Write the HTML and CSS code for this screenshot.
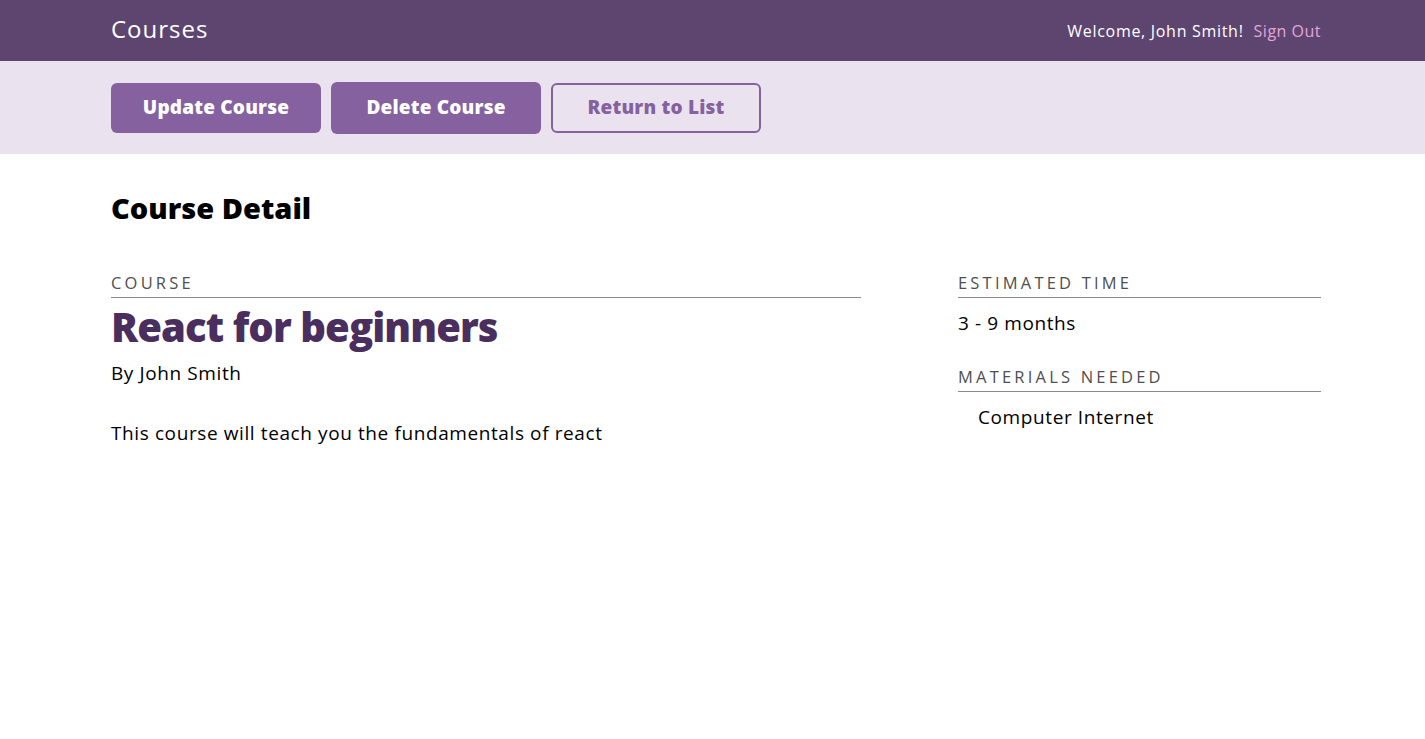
FILE: index.html
```html
<!DOCTYPE html>
<html lang="en">
<head>
<meta charset="utf-8">
<title>Courses</title>
<link rel="stylesheet" href="styles.css">
</head>
<body>
<header class="header">
  <div class="wrap header-inner">
    <h1 class="logo">Courses</h1>
    <nav class="user-nav">
      <span class="welcome">Welcome, John Smith!</span>
      <a class="signout" href="#">Sign Out</a>
    </nav>
  </div>
</header>
<div class="actions">
  <div class="wrap actions-inner">
    <a class="button" href="#">Update Course</a>
    <a class="button button-active" href="#">Delete Course</a>
    <a class="button button-secondary" href="#">Return to List</a>
  </div>
</div>
<main class="wrap">
  <h2 class="page-title">Course Detail</h2>
  <div class="detail">
    <div class="main-col">
      <h3 class="label">Course</h3>
      <h4 class="course-title">React for beginners</h4>
      <p class="author">By John Smith</p>
      <p class="desc">This course will teach you the fundamentals of react</p>
    </div>
    <div class="side-col">
      <h3 class="label">Estimated Time</h3>
      <p class="side-text">3 - 9 months</p>
      <h3 class="label label-gap">Materials Needed</h3>
      <ul class="materials">
        <li>Computer Internet</li>
      </ul>
    </div>
  </div>
</main>
</body>
</html>
```
FILE: styles.css
```css
* { box-sizing: border-box; }
body {
  margin: 0;
  font-family: "Open Sans", "Liberation Sans", sans-serif;
  color: #000;
  background: #fff;
}
.wrap {
  width: 1425px;
  padding: 0 104px 0 111px;
}
.header {
  background: #5d4570;
  height: 61px;
}
.header-inner {
  height: 61px;
  display: flex;
  align-items: center;
  justify-content: space-between;
}
.logo {
  margin: -4px 0 0;
  font-size: 24px;
  font-weight: 400;
  letter-spacing: 1px;
  color: #fff;
}
.user-nav {
  display: flex;
  gap: 10px;
  font-size: 16px;
}
.welcome { color: #fff; font-weight: 500; letter-spacing: 0.7px; }
.signout { color: #e3a6d9; text-decoration: none; letter-spacing: 0.5px; }
.actions {
  background: #ebe2f0;
  height: 93px;
}
.actions-inner {
  display: flex;
  align-items: center;
  gap: 10px;
  height: 93px;
}
.button {
  width: 210px;
  height: 50px;
  display: flex;
  align-items: center;
  justify-content: center;
  background: #8561a0;
  color: #fff;
  border-radius: 6px;
  font-size: 19px;
  font-weight: 800;
  letter-spacing: 0.2px;
  text-decoration: none;
  padding-bottom: 2px;
}
.button-active { height: 52px; }
.button-secondary {
  background: transparent;
  border: 2px solid #8561a0;
  color: #8561a0;
}
.page-title {
  margin: 36px 0 0;
  font-size: 29px;
  font-weight: 800;
  letter-spacing: 0;
  line-height: 36px;
}
.detail {
  display: flex;
  justify-content: space-between;
  margin-top: 46px;
}
.main-col { width: 750px; }
.side-col { width: 363px; }
.label {
  margin: 0;
  font-size: 16.5px;
  font-weight: 400;
  letter-spacing: 3.2px;
  text-transform: uppercase;
  color: #4f4f4f;
  line-height: 22px;
  padding-bottom: 3px;
  border-bottom: 1px solid #8a8a8a;
}
.label-gap { margin-top: 30px; }
.course-title {
  margin: 3px 0 0;
  font-size: 40px;
  font-weight: 800;
  letter-spacing: -0.9px;
  line-height: 52px;
  color: #4a2e5e;
}
.author,
.desc,
.side-text,
.materials {
  font-size: 19px;
  letter-spacing: 0.6px;
  line-height: 26px;
}
.author {
  margin: 7px 0 0;
}
.desc {
  margin: 34px 0 0;
}
.side-text {
  margin: 12px 0 0;
}
.materials {
  margin: 12px 0 0;
  padding-left: 20px;
  list-style: none;
}
```
